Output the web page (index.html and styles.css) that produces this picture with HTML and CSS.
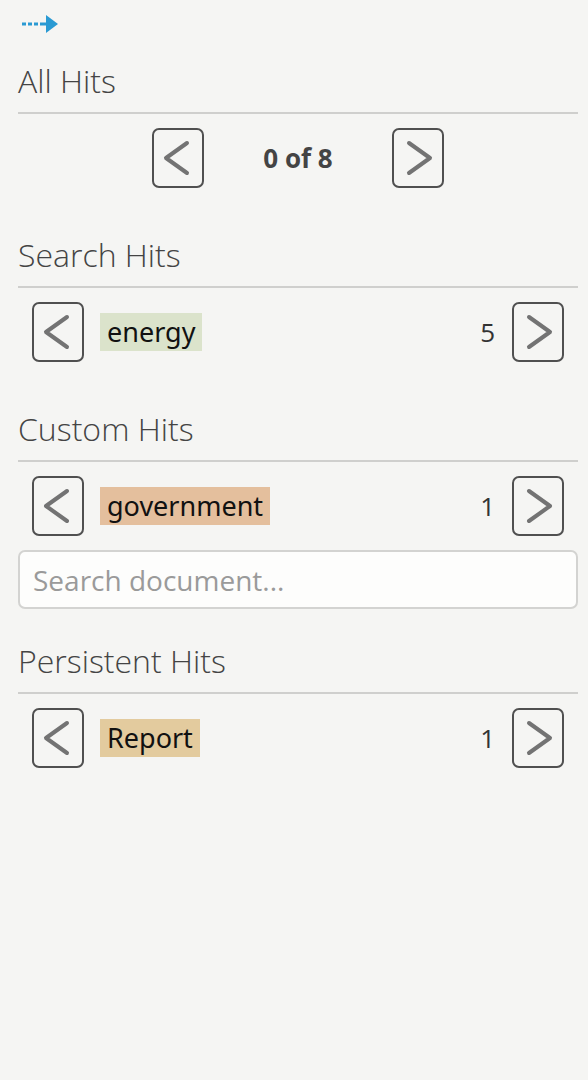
FILE: index.html
```html
<!DOCTYPE html>
<html lang="en">
<head>
<meta charset="utf-8">
<title>Hits</title>
<link rel="stylesheet" href="styles.css">
</head>
<body>
<div class="panel">
  <div class="toggle">
    <svg width="36" height="18" viewBox="0 0 36 18">
      <g fill="#2a9ad3">
        <rect x="0" y="7.5" width="4" height="3"/>
        <rect x="6" y="7.5" width="4" height="3"/>
        <rect x="12" y="7.5" width="4" height="3"/>
        <rect x="18" y="7.5" width="6" height="3"/>
        <polygon points="24,0 36,9 24,18"/>
      </g>
    </svg>
  </div>

  <section class="section">
    <h2 class="heading">All Hits</h2>
    <div class="all-row">
      <button class="nav-btn" aria-label="Previous">
        <svg viewBox="0 0 48 56"><polyline points="33,13 12,28 33,43"/></svg>
      </button>
      <span class="all-count">0 of 8</span>
      <button class="nav-btn" aria-label="Next">
        <svg viewBox="0 0 48 56"><polyline points="15,13 36,28 15,43"/></svg>
      </button>
    </div>
  </section>

  <section class="section">
    <h2 class="heading">Search Hits</h2>
    <div class="hit-row">
      <button class="nav-btn" aria-label="Previous">
        <svg viewBox="0 0 48 56"><polyline points="33,13 12,28 33,43"/></svg>
      </button>
      <span class="term term-search">energy</span>
      <span class="count">5</span>
      <button class="nav-btn" aria-label="Next">
        <svg viewBox="0 0 48 56"><polyline points="15,13 36,28 15,43"/></svg>
      </button>
    </div>
  </section>

  <section class="section section-custom">
    <h2 class="heading">Custom Hits</h2>
    <div class="hit-row">
      <button class="nav-btn" aria-label="Previous">
        <svg viewBox="0 0 48 56"><polyline points="33,13 12,28 33,43"/></svg>
      </button>
      <span class="term term-custom">government</span>
      <span class="count">1</span>
      <button class="nav-btn" aria-label="Next">
        <svg viewBox="0 0 48 56"><polyline points="15,13 36,28 15,43"/></svg>
      </button>
    </div>
    <input class="search" type="text" placeholder="Search document...">
  </section>

  <section class="section">
    <h2 class="heading">Persistent Hits</h2>
    <div class="hit-row">
      <button class="nav-btn" aria-label="Previous">
        <svg viewBox="0 0 48 56"><polyline points="33,13 12,28 33,43"/></svg>
      </button>
      <span class="term term-persistent">Report</span>
      <span class="count">1</span>
      <button class="nav-btn" aria-label="Next">
        <svg viewBox="0 0 48 56"><polyline points="15,13 36,28 15,43"/></svg>
      </button>
    </div>
  </section>
</div>
</body>
</html>
```

FILE: styles.css
```css
html, body {
  margin: 0;
  padding: 0;
  background: #f5f5f3;
  height: 100%;
}

body {
  font-family: "Open Sans", "Noto Sans", sans-serif;
  color: #444;
}

.panel {
  padding: 0 10px 0 18px;
}

.toggle {
  padding-top: 15px;
  padding-left: 4px;
  height: 18px;
  margin-bottom: 26px;
}

.toggle svg {
  display: block;
}

.section {
  margin-bottom: 45px;
}

.section-custom {
  margin-bottom: 30px;
}

.heading {
  margin: 0;
  font-size: 32px;
  font-weight: 300;
  line-height: 44px;
  color: #444;
  padding-bottom: 9px;
  border-bottom: 2px solid #cfcfcd;
}

.nav-btn {
  box-sizing: border-box;
  width: 52px;
  height: 60px;
  padding: 0;
  border: 2px solid #505050;
  border-radius: 7px;
  background: transparent;
  display: flex;
  align-items: center;
  justify-content: center;
  flex: none;
}

.nav-btn svg {
  width: 48px;
  height: 56px;
  display: block;
}

.nav-btn polyline {
  fill: none;
  stroke: #737373;
  stroke-width: 4;
  stroke-linecap: round;
  stroke-linejoin: round;
}

.all-row {
  display: flex;
  align-items: center;
  justify-content: center;
  margin: 14px 0;
}

.all-count {
  width: 188px;
  text-align: center;
  font-size: 26px;
  font-weight: 700;
  color: #444;
}

.hit-row {
  display: flex;
  align-items: center;
  padding: 0 14px;
  margin: 14px 0;
}

.term {
  margin-left: 16px;
  height: 38px;
  line-height: 38px;
  padding: 0 7px;
  font-family: "Noto Sans", "Open Sans", sans-serif;
  font-size: 27px;
  color: #111;
}

.term-search {
  background: #dbe3cb;
}

.term-custom {
  background: #e4bf9d;
}

.term-persistent {
  background: #e3cb9e;
}

.count {
  margin-left: auto;
  margin-right: 17px;
  font-size: 26px;
  color: #333;
}

.search {
  display: block;
  box-sizing: border-box;
  width: 100%;
  height: 59px;
  margin: 0;
  padding: 0 13px;
  border: 2px solid #d3d3d1;
  border-radius: 7px;
  background: #fdfdfc;
  font-family: "Open Sans", sans-serif;
  font-size: 28px;
  color: #333;
  outline: none;
}

.search::placeholder {
  color: #9a9a9a;
}
```
